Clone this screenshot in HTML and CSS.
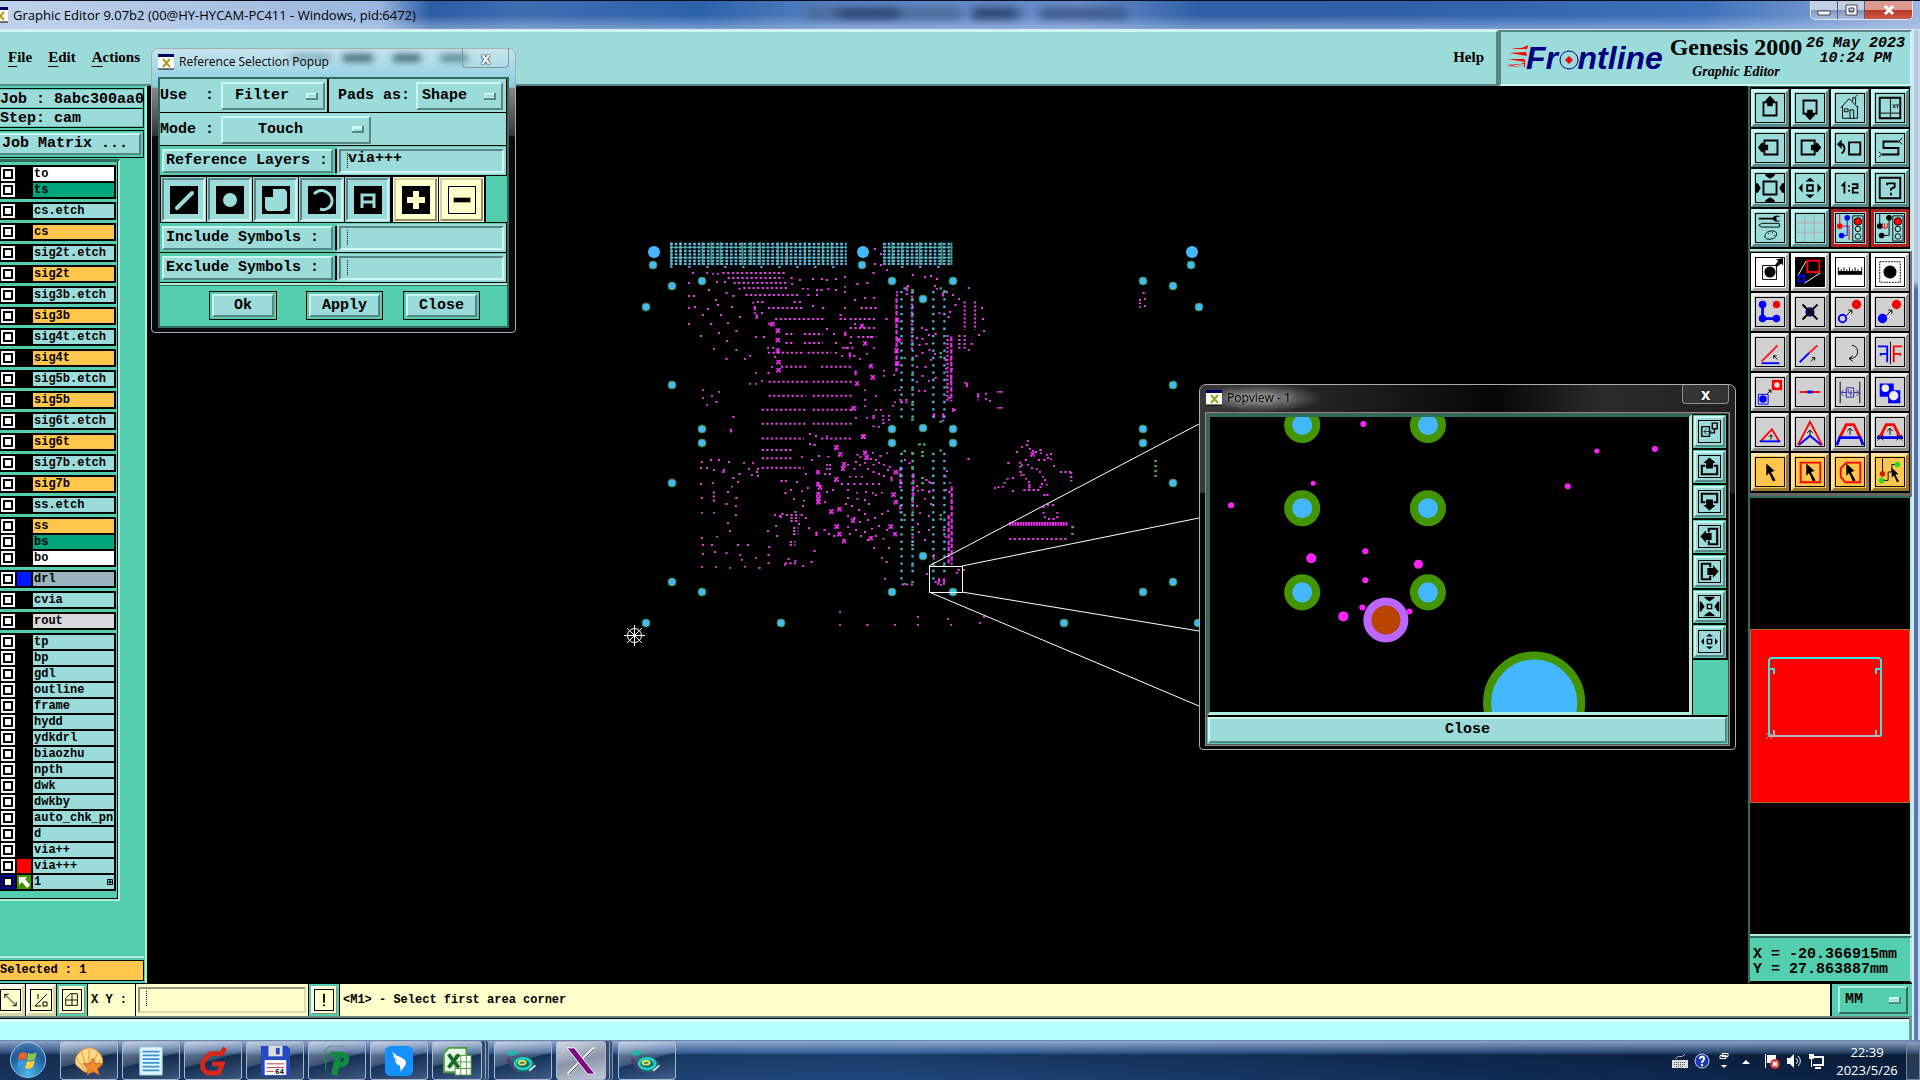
FILE: index.html
```html
<!doctype html>
<html lang="en">
<head>
    <meta charset="UTF-8" />
    <meta name="viewport" content="width=device-width, initial-scale=1.0" />
    <title>Graphic Editor 9.07b2</title>
    <link rel="stylesheet" href="styles.css">
</head>
<body>
    <!-- shared icon shapes -->
    <svg class="defs" aria-hidden="true">
        <symbol id="i-up" viewBox="0 0 30 30"><path class="t2" d="M8 9H22V23H8z"/><path d="M15 2l5 5v2h-2v4h-6V9h-2V7z"/></symbol>
        <symbol id="i-down" viewBox="0 0 30 30"><path class="t2" d="M8 7H22V21H8z"/><path d="M15 28l5-5v-2h-2v-4h-6v4h-2v2z"/></symbol>
        <symbol id="i-left" viewBox="0 0 30 30"><path class="t2" d="M9 7H23V22H9z"/><path d="M2 14.500l4-5h2v2h5v6H8v2H6z"/></symbol>
        <symbol id="i-right" viewBox="0 0 30 30"><path class="t2" d="M6 7H20V22H6z"/><path d="M27 14.500l-4-5h-2v2h-5v6h5v2h2z"/></symbol>
        <symbol id="i-in" viewBox="0 0 30 30"><path class="t2" d="M8 8H22V22H8z"/><path d="M15 5l-5-3V0h10v2zM15 25l-5 3v2h10v-2zM5 15l-3-5H0v10h2zM25 15l3-5h2v10h-2z"/></symbol>
        <symbol id="i-out" viewBox="0 0 30 30"><path class="t2" d="M12 12H18V18H12z"/><path d="M15 4l5 4H10zM15 26l5-4H10zM3 15l4-5v10zM27 15l-4-5v10z"/></symbol>
        <symbol id="i-arrow" viewBox="0 0 30 30"><path d="M11 6l9 8-4 1 5 9-3 1-4-9-3 3z"/></symbol>
        <symbol id="i-light" viewBox="0 0 30 30"><path class="t1" d="M18 2H29V29H18z"/><circle cx="23.500" cy="8" r="4" fill="#f00" stroke="#000"/><circle class="t1" cx="23.500" cy="16" r="3"/><circle class="t1" cx="23.500" cy="24" r="3"/></symbol>
        <symbol id="i-xwin" viewBox="0 0 16 16"><path fill="#fff" d="M0 0h16v15H0z"/><path fill="#006" d="M0 0h16v3H0z"/><path d="M5 5l7 8M12 5l-7 8" stroke="#a9a020" stroke-width="2"/><path class="t1" d="M0 15H16"/></symbol>
        <symbol id="i-snail" viewBox="3 0 36 30"><ellipse cx="21" cy="19" rx="13" ry="9" fill="#146f72"/><path d="M1 8c6-6 12-6 15-2l-6 3z" fill="#22b8a8"/><path d="M3 12l7 9 4 5" stroke="#513a72" stroke-width="4" fill="none"/><ellipse cx="21" cy="18" rx="9" ry="6" fill="none" stroke="#28d0be" stroke-width="3"/><ellipse cx="20" cy="17" rx="4" ry="2" fill="none" stroke="#e6e85a" stroke-width="2"/><path d="M28 26l7-6" stroke="#ddd" stroke-width="2"/></symbol>
    </svg>

    <header class="titlebar">
        <svg class="app-icon"><use href="#i-xwin"/></svg>
        <h1>Graphic Editor 9.07b2 (00@HY-HYCAM-PC411 - Windows, pid:6472)</h1>
        <div class="ghost"></div>
        <div class="win-buttons">
            <button aria-label="Minimize"><svg viewBox="0 0 16 12"><path fill="#fff" stroke="#445" d="M2 7h12v4H2z"/></svg></button>
            <button aria-label="Maximize"><svg viewBox="0 0 16 12"><path fill="#fff" stroke="#445" fill-rule="evenodd" d="M3 1h11v10H3zM6 4h5v4H6z"/></svg></button>
            <button class="win-close" aria-label="Close window"><svg viewBox="0 0 16 12"><path d="M4 2l8 8M12 2l-8 8" stroke="#fff" stroke-width="3"/></svg></button>
        </div>
    </header>

    <div class="window">
        <div class="top">
            <nav class="menubar">
                <a href="#"><u>F</u>ile</a>
                <a href="#"><u>E</u>dit</a>
                <a href="#"><u>A</u>ctions</a>
                <a href="#" class="help">Help</a>
            </nav>
            <div class="brand">
                <svg class="logo" viewBox="0 -5 162 40">
                    <path fill="#f00" d="M4 4h12l6-3-1 4zM3 9L20 8l1 4zM1 15l17 0 2 3zM0 21l15-1 4-2v5zM6 5L22 3l-2 2zM2 22l16 1v-3z"/>
                    <text x="20" y="25">Fr<tspan fill="#9bdcdb">o</tspan>ntline</text>
                    <circle cx="63" cy="16" r="9" fill="#9bdcdb" stroke="#000080"/>
                    <path fill="#f00" d="M63 12l4 4-4 4-4-4z"/>
                </svg>
                <div class="product">
                    <strong>Genesis 2000</strong>
                    <em>Graphic Editor</em>
                </div>
                <div class="date">26 May 2023<br>10:24 PM</div>
            </div>
        </div>

        <main>
            <aside class="layers-panel">
                <div class="job">
                    <div>Job : 8abc300aa0</div>
                    <div>Step: cam</div>
                </div>
                <div class="matrix"><button class="bevel">Job Matrix ...</button></div>
                <div class="layers">
                    <div class="group">
                        <label><input type="checkbox"><i></i><span class="white">to</span></label>
                        <label><input type="checkbox"><i></i><span class="green">ts</span></label>
                    </div>
                    <div class="group"><label><input type="checkbox"><i></i><span>cs.etch</span></label></div>
                    <div class="group"><label><input type="checkbox"><i></i><span class="orange">cs</span></label></div>
                    <div class="group"><label><input type="checkbox"><i></i><span>sig2t.etch</span></label></div>
                    <div class="group"><label><input type="checkbox"><i></i><span class="orange">sig2t</span></label></div>
                    <div class="group"><label><input type="checkbox"><i></i><span>sig3b.etch</span></label></div>
                    <div class="group"><label><input type="checkbox"><i></i><span class="orange">sig3b</span></label></div>
                    <div class="group"><label><input type="checkbox"><i></i><span>sig4t.etch</span></label></div>
                    <div class="group"><label><input type="checkbox"><i></i><span class="orange">sig4t</span></label></div>
                    <div class="group"><label><input type="checkbox"><i></i><span>sig5b.etch</span></label></div>
                    <div class="group"><label><input type="checkbox"><i></i><span class="orange">sig5b</span></label></div>
                    <div class="group"><label><input type="checkbox"><i></i><span>sig6t.etch</span></label></div>
                    <div class="group"><label><input type="checkbox"><i></i><span class="orange">sig6t</span></label></div>
                    <div class="group"><label><input type="checkbox"><i></i><span>sig7b.etch</span></label></div>
                    <div class="group"><label><input type="checkbox"><i></i><span class="orange">sig7b</span></label></div>
                    <div class="group"><label><input type="checkbox"><i></i><span>ss.etch</span></label></div>
                    <div class="group">
                        <label><input type="checkbox"><i></i><span class="orange">ss</span></label>
                        <label><input type="checkbox"><i></i><span class="green">bs</span></label>
                        <label><input type="checkbox"><i></i><span class="white">bo</span></label>
                    </div>
                    <div class="group"><label><input type="checkbox"><i class="blue"></i><span class="slate">drl</span></label></div>
                    <div class="group"><label><input type="checkbox"><i></i><span>cvia</span></label></div>
                    <div class="group"><label><input type="checkbox"><i></i><span class="silver">rout</span></label></div>
                    <div class="group">
                        <label><input type="checkbox"><i></i><span>tp</span></label>
                        <label><input type="checkbox"><i></i><span>bp</span></label>
                        <label><input type="checkbox"><i></i><span>gdl</span></label>
                        <label><input type="checkbox"><i></i><span>outline</span></label>
                        <label><input type="checkbox"><i></i><span>frame</span></label>
                        <label><input type="checkbox"><i></i><span>hydd</span></label>
                        <label><input type="checkbox"><i></i><span>ydkdrl</span></label>
                        <label><input type="checkbox"><i></i><span>biaozhu</span></label>
                        <label><input type="checkbox"><i></i><span>npth</span></label>
                        <label><input type="checkbox"><i></i><span>dwk</span></label>
                        <label><input type="checkbox"><i></i><span>dwkby</span></label>
                        <label><input type="checkbox"><i></i><span>auto_chk_pnl</span></label>
                        <label><input type="checkbox"><i></i><span>d</span></label>
                        <label><input type="checkbox"><i></i><span>via++</span></label>
                        <label><input type="checkbox"><i class="red"></i><span>via+++</span></label>
                        <label><input type="checkbox" checked><i class="work"><svg viewBox="0 0 14 14"><path fill="#fff" d="M2 2h8L8 4l5 6-3 3-5-6-3 3z"/></svg></i><span class="mark">1<svg viewBox="0 0 6 6"><path class="t1" d="M.500 .500h5v5h-5zM3 0v6M0 3h6"/></svg></span></label>
                    </div>
                </div>
                <div class="selected">Selected : 1</div>
            </aside>

            <section class="canvas">
                <svg class="board" viewBox="147 86 1601 897" preserveAspectRatio="xMinYMin slice">
                    <defs>
                        <marker id="via" markerUnits="userSpaceOnUse" markerWidth="6" markerHeight="6" refX="3" refY="3"><path fill="#f03cf0" d="M0 0h6v6H0z"/></marker>
                        <marker id="x" markerUnits="userSpaceOnUse" markerWidth="12" markerHeight="15" refX="6" refY="7"><path fill="#ff2cff" d="M0 0h4v3h3V0h5v5H9v4h3v6H8v-4H5v4H0V9h3V5H0z"/></marker>
                        <marker id="pad" markerUnits="userSpaceOnUse" markerWidth="12" markerHeight="12" refX="6" refY="6"><circle cx="6" cy="6" r="4" fill="#44b8ff" stroke="#3c8c28"/></marker>
                        <marker id="gdot" markerUnits="userSpaceOnUse" markerWidth="8" markerHeight="8" refX="4" refY="4"><path fill="#3fa56a" d="M0 0h8v7H0z"/></marker>
                    </defs>

                    <!-- upper half of the board -->
                    <g transform="translate(620 220) scale(.383 .333)">
                        <path class="rail" d="M131 82H592M131 113H592M687 82H868M687 113H868M134 67V143M157 67V135M215 67V135M238 67V135M262 67V135M320 67V135M343 67V135M366 67V135M413 67V135M436 67V135M483 67V135M529 67V135M552 67V135M711 67V135M735 67V135M782 67V135M840 67V135M865 67V135"/>
                        <path class="edge" d="M131 72H592M131 82H592M131 93H592M131 103H592M131 113H592M131 123H592M131 132H592M687 72H868M687 82H868M687 93H868M687 103H868M687 113H868M687 123H868M687 132H868"/>
                        <path class="edge-last" d="M131 141H560M734 141H840"/>
                        <path class="vias" d="M280 159H431M281 174H427M296 189H437M322 204H440M327 225H470M386 264H476M405 297H532M432 342H450M480 342H530M432 369H450M480 369H530M386 399H478M490 399H552M420 441H492M525 441H606M388 486H494M503 486H606M388 528H486M503 528H606M370 570H486M503 570H606M370 612H486M503 612H606M370 656H480M525 656H606M600 297H670M600 324H670M628 264H670M620 351H670M580 384H612M855 345V545M900 245V330M927 245V330M886 345V390M900 345V390M762 215V390M720 217H732M720 227H732M850 480H866M850 420H866"/>
                        <path class="wall" d="M722 235V455M865 350V545M843 218V230M749 200V225M600 398V418M844 580V605M820 580V600M935 520V542M588 335V350M352 258V282M357 283V300M615 452V470M290 627V638M906 488V506"/>
                        <path class="holes" d="M735 213V605M764 213V605M818 213V605M847 213V605"/>
                        <polyline marker-start="url(#x)" marker-mid="url(#x)" marker-end="url(#x)" points="412,332 412,360 412,392 414,426 414,450 640,370 619,491 660,472 635,650 724,300 728,360 722,392 724,430 398,312 632,318 655,438 610,565"/>
                        <polyline marker-start="url(#via)" marker-mid="url(#via)" marker-end="url(#via)" points="190,159 228,159 242,161 256,161 270,159 254,186 274,186 181,189 312,206 232,210 181,228 193,228 278,219 296,228 250,240 181,264 196,261 230,267 256,255 292,261 216,285 264,285 313,291 181,312 238,312 282,309 258,339 304,333 212,348 280,363 356,351 376,351 246,387 304,390 278,417 326,417 340,408 386,384 400,384 340,492 356,459 370,484 216,510 216,534 240,528 258,516 252,546 228,555 296,591 356,492 448,174 470,180 504,177 528,177 540,180 564,177 588,171 450,192 478,206 490,206 514,210 526,210 544,208 564,210 588,200 492,225 514,225 360,246 372,246 456,246 470,246 348,248 504,258 530,264 588,216 614,240 588,264 576,285 588,297 576,297 614,312 370,279 540,327 558,342 564,369 390,312 564,399 640,234 664,234 620,192 646,189 662,159 666,132 666,87 682,102 682,135 698,150 696,297 604,351 602,369 612,408 626,417 580,408 590,384 644,402 664,384 655,351 640,540 668,528 690,453 690,468 716,465 718,512 730,512 640,512 640,560 616,594 644,594 662,594 662,620 676,621 662,588 682,570 686,588 686,600 702,588 702,600 688,610 712,558 718,548 668,570 765,165 796,171 812,168 828,177 752,198 822,198 828,206 854,216 886,237 912,204 870,225 876,255 862,276 858,291 945,264 948,297 951,333 938,345 918,372 912,390 834,280 788,324 800,330 776,354 790,357 806,345 824,342 782,375 800,372 774,408 790,399 808,390 822,402 776,441 798,441 812,420 790,468 806,483 776,486 824,474 796,513 780,513 732,540 748,540 735,546 748,548 870,567 874,570 870,573 900,488 956,522 956,537 966,543 988,516 996,516 988,564 996,564 396,441 388,459 404,411 1367,219 1370,237 1358,240 1358,250 1358,260 1370,258 496,642 512,648 540,650 604,570 850,420 852,447 866,447 854,500 860,534"/>
                        <polyline marker-start="url(#gdot)" marker-mid="url(#gdot)" marker-end="url(#gdot)" points="744,206 764,210 838,206 848,214 744,414 838,400 838,412 838,606 764,600 764,238 764,285 764,330 764,375 764,420 764,465 764,510 764,555"/>
                    </g>

                    <!-- lower half -->
                    <g transform="translate(620 430) scale(.383 .333)">
                        <path class="vias" d="M370 60H452M370 85H452M370 113H480M245 185V216M430 400H466M445 255H470M445 264H470M445 273H470M452 294H466M452 303H466M452 312H466M443 336H458M443 345H458M1053 180H1095M1148 126H1180M1178 126V155M1016 327H1168M764 190V240M764 320V350M735 464H768M1045 95V120"/>
                        <path class="wall" d="M866 170V405M858 255V400M732 110V175M732 225V250M766 130V200M513 305V318M709 140V156M833 445V462M846 445V462M1069 162V178"/>
                        <path class="chip" d="M1016 282H1169"/>
                        <path class="holes" d="M735 68V460M764 68V430M818 68V462M847 68V440"/>
                        <polyline marker-start="url(#x)" marker-mid="url(#x)" marker-end="url(#x)" points="635,20 565,52 575,72 585,102 582,116 517,126 517,162 518,192 518,206 518,216 565,148 573,237 552,245 566,290 573,312 585,333 720,126 714,194 720,216 707,290 718,312 644,82 608,272 655,324 640,68 1077,72 522,172"/>
                        <polyline marker-start="url(#via)" marker-mid="url(#via)" marker-end="url(#via)" points="214,96 212,114 212,162 214,204 214,248 214,324 216,345 216,372 214,411 496,12 512,18 496,42 508,45 238,90 258,90 284,96 228,114 246,120 270,126 272,120 324,98 348,98 336,117 360,117 358,126 344,135 312,132 296,144 308,156 243,160 292,170 360,138 282,186 304,204 302,228 278,222 245,248 302,255 282,280 288,303 254,320 240,345 308,345 248,366 278,370 314,376 334,345 318,390 356,384 388,400 388,375 390,351 326,410 288,414 250,411 364,414 386,303 408,288 404,255 418,258 424,252 436,255 458,246 420,262 422,153 434,153 486,132 462,156 432,189 446,180 476,184 490,174 454,208 480,212 478,228 474,255 486,264 494,294 468,282 410,318 476,82 502,90 520,78 544,80 540,104 548,104 540,116 548,116 536,132 548,132 540,186 536,216 556,180 580,162 596,162 612,162 628,162 644,162 660,162 676,162 600,140 616,140 632,140 596,104 616,96 612,116 626,106 640,98 662,104 676,98 690,104 704,110 620,74 628,82 660,68 680,78 698,70 655,86 668,90 648,116 662,126 676,132 690,138 700,120 596,180 618,188 642,186 660,190 596,204 620,206 640,210 650,222 668,196 684,188 590,222 606,228 624,240 640,252 596,258 612,264 626,276 648,270 666,264 684,252 700,244 596,292 616,300 640,306 658,296 676,288 698,300 534,300 546,312 560,318 600,312 630,318 648,330 668,318 688,326 664,354 702,354 684,384 696,396 692,447 508,363 478,408 500,396 430,405 440,388 458,392 800,150 808,156 790,180 778,182 806,186 796,206 812,222 776,228 784,250 806,258 778,282 806,300 796,330 780,306 808,184 812,160 776,168 744,90 756,100 854,124 850,140 862,158 852,180 860,186 910,87 1014,99 1066,33 1050,50 1062,45 1070,56 1078,62 1086,66 1098,60 1100,70 1114,74 1126,72 1118,84 1126,88 1134,108 1094,90 1060,90 1066,104 1050,106 1046,126 1054,134 1060,146 1068,156 1076,114 1088,118 1096,126 1104,140 1110,150 1102,162 1098,172 1114,164 1108,90 1036,66 1026,144 1012,146 1004,158 1000,170 988,172 980,174 1026,183 1048,136 1108,195 1116,195 1106,232 1106,248 1118,225 1130,225 1142,248 1110,262 1120,267 1132,267 1142,262 802,432 880,429 884,420 898,420 824,456 830,462 838,465 846,462 575,546 575,585 646,585 718,585 778,561 778,585 857,567 865,585 940,579 951,561 820,376 820,386 846,300 850,320 290,2"/>
                        <polyline marker-start="url(#gdot)" marker-mid="url(#gdot)" marker-end="url(#gdot)" points="744,64 838,62 764,70 764,112 764,160 764,210 764,256 764,300 764,345 764,408 744,256 744,270 838,256 838,268 790,66 790,78 782,44 794,44 790,144 790,160 1399,93 1399,108 1399,124 1399,138 1182,292 1182,312 744,462 764,456 820,408 846,408"/>
                    </g>

                    <polyline marker-start="url(#pad)" marker-mid="url(#pad)" marker-end="url(#pad)" points="653,265 862,265 1191,265 702,281 892,281 953,281 1143,281 672,286 1173,286 646,307 1199,307 923,299 672,385 1173,385 702,429 892,429 953,429 923,428 1143,429 702,443 892,443 953,443 1143,443 672,483 1173,483 923,556 672,582 1173,582 702,592 892,592 953,592 1143,592 646,623 781,623 1064,623 1198,623"/>
                    <g fill="#44b8ff"><circle cx="654" cy="252" r="6"/><circle cx="863" cy="252" r="6"/><circle cx="1192" cy="252" r="6"/></g>

                    <g class="zoom-lines">
                        <path d="M929.500 566.500H962.500V592.500H929.500zM929 566L1199 424M962 566L1199 518M962 592L1199 631M929 592L1199 706"/>
                        <path d="M624 635.500H645M634.500 625V646M627 628l15 15M642 628l-15 15"/>
                        <circle cx="634.500" cy="635.500" r="7"/>
                    </g>
                </svg>
            </section>

            <aside class="tools">
                <div class="toolset aqua">
                    <button aria-label="Pan up"><svg viewBox="0 0 30 30"><use href="#i-up"/></svg></button>
                    <button aria-label="Pan down"><svg viewBox="0 0 30 30"><use href="#i-down"/></svg></button>
                    <button aria-label="Home"><svg viewBox="0 0 30 30"><path class="t1" d="M5 15l9-10 10 10M7 13v13h16V13M9 16h4v3H9zM15 26v-9h4v9M18 8V4h3v7M21 3l2-2"/></svg></button>
                    <button aria-label="Popview"><svg viewBox="0 0 30 30"><path class="t2" d="M4 4H26V26H4z"/><path class="t1" d="M15.500 4V26M4 20.500H26M18 11l3 4M21 11l-3 4M22 11l1 2 1-2M23 13v2"/></svg></button>
                    <button aria-label="Pan left"><svg viewBox="0 0 30 30"><use href="#i-left"/></svg></button>
                    <button aria-label="Pan right"><svg viewBox="0 0 30 30"><use href="#i-right"/></svg></button>
                    <button aria-label="Previous view"><svg viewBox="0 0 30 30"><path class="t2" d="M14 9H26V22H14z"/><path class="t2" d="M4 11h3c3 3 3 7-1 10"/><path d="M1 11l5-5v10z"/></svg></button>
                    <button aria-label="Snake view"><svg viewBox="0 0 30 30"><path class="t2" d="M25 8H8v7h16v7H6"/><path class="t1" d="M28 4l-3 4 3 3M3 19l3 3-3 3"/></svg></button>
                    <button aria-label="Zoom in"><svg viewBox="0 0 30 30"><use href="#i-in"/></svg></button>
                    <button aria-label="Zoom out"><svg viewBox="0 0 30 30"><use href="#i-out"/></svg></button>
                    <button aria-label="Scale"><svg viewBox="0 0 30 30"><path class="t2" d="M6 13l3-3v11M14 12v2M14 17v2M17 11h6v4h-5v5h6"/></svg></button>
                    <button aria-label="What is"><svg viewBox="0 0 30 30"><path class="t2" d="M4 4H26V26H4zM12 12v-2h8v4l-4 2v2M16 20v3"/></svg></button>
                    <button aria-label="Setup"><svg viewBox="0 0 30 30"><path d="M3 4h15c2-3 6-3 8-1h-4v4h4c-2 2-6 2-8-1H3z"/><path class="t1" d="M3 12l3-2h19v4H6zM10 22c2-5 12-5 12-1s-3 6-8 6-5-3-4-5zM13 21h1M17 20h1M19 23h1"/></svg></button>
                    <button aria-label="Grid"><svg viewBox="0 0 30 30"><path fill="none" stroke="#b6a0aa" d="M9.500 0V30M19.500 0V30M0 9.500H30M0 19.500H30"/></svg></button>
                    <button class="stop" aria-label="Net check"><svg viewBox="0 0 30 30"><path fill="none" stroke="#f00" d="M4 0v13h10v15"/><circle cx="4" cy="13" r="3" fill="#f00"/><path fill="none" stroke="#00f" d="M12 4v19H6"/><circle cx="12" cy="4" r="3" fill="#00f"/><circle cx="6" cy="23" r="3" fill="#00f"/><use href="#i-light"/></svg></button>
                    <button class="stop" aria-label="Spacing check"><svg viewBox="0 0 30 30"><path class="t1" d="M4 0v13M14 4v19H6"/><circle cx="4" cy="13" r="3"/><circle cx="14" cy="4" r="3"/><circle cx="6" cy="23" r="3"/><path stroke="#f00" fill="none" d="M7 10v5h5v-5M9 10v5"/><use href="#i-light"/></svg></button>
                </div>

                <div class="toolset gray">
                    <button class="plain" aria-label="Move feature"><svg viewBox="0 0 30 30"><path class="t1" d="M7 8H22V23H7z"/><circle cx="15" cy="15" r="6"/><path d="M20 8l4-5-3-1 8-2v8l-2-2-5 4z"/></svg></button>
                    <button class="plain dark" aria-label="Highlight"><svg viewBox="0 0 30 30"><path stroke="#fff" d="M2 19L11 3M9 27L26 16"/><path fill="none" stroke="#f00" stroke-width="2" d="M12 3H25V15H12z"/><path fill="none" stroke="#00f" stroke-width="2" d="M3 19H9V25H3z"/></svg></button>
                    <button class="plain" aria-label="Measure"><svg viewBox="0 0 30 30"><path d="M2 14h26v4H2z"/><path class="t1" d="M2.500 10v6M5.500 12v4M8.500 10v6M11.500 12v4M14.500 10v6M17.500 12v4M20.500 10v6M23.500 12v4M27.500 10v6"/></svg></button>
                    <button class="plain" aria-label="Select pad"><svg viewBox="0 0 30 30"><path class="t1" stroke-dasharray="2 1" d="M4 4H26V26H4z"/><circle cx="15" cy="15" r="7"/></svg></button>
                    <button aria-label="Net"><svg viewBox="0 0 30 30"><path stroke="#00f" stroke-width="3" fill="none" d="M7 7V22H22"/><g fill="#00f"><circle cx="7" cy="7" r="4"/><circle cx="7" cy="22" r="4"/><circle cx="22" cy="22" r="4"/></g><circle cx="22" cy="7" r="4" fill="#f00"/></svg></button>
                    <button aria-label="Delete"><svg viewBox="0 0 30 30"><circle cx="15" cy="15" r="5" fill="#118"/><path class="t2" d="M7 7l16 16M23 7L7 23"/></svg></button>
                    <button aria-label="Copy"><svg viewBox="0 0 30 30"><circle cx="7" cy="22" r="4" fill="none" stroke="#00f" stroke-width="2"/><circle cx="22" cy="7" r="5" fill="#f00"/><path class="t1" d="M11 19l6-6M13 13h4v4"/></svg></button>
                    <button aria-label="Move"><svg viewBox="0 0 30 30"><circle cx="7" cy="22" r="5" fill="#00f"/><circle cx="22" cy="7" r="5" fill="#f00"/><path class="t1" d="M11 19l6-6M13 13h4v4"/></svg></button>
                    <button aria-label="Rotate line"><svg viewBox="0 0 30 30"><path stroke="#f02020" stroke-width="2" d="M6 25L23 8"/><path stroke="#00f" stroke-width="2" d="M6 27H25"/><path class="t1" d="M23 23l-4-4M19 22v-3h3"/></svg></button>
                    <button aria-label="Stretch line"><svg viewBox="0 0 30 30"><path stroke="#00f" stroke-width="2" d="M4 26L14 16"/><path stroke="#f02020" stroke-width="2" d="M14 16L23 8"/><path class="t1" d="M16 25l4-4M17 21h3v3"/></svg></button>
                    <button aria-label="Rotate"><svg viewBox="0 0 30 30"><path class="t1" d="M17 8c8 0 9 14-2 14M18 19l-4 3 4 3"/></svg></button>
                    <button aria-label="Mirror"><svg viewBox="0 0 30 30"><path fill="none" stroke="#00f" stroke-width="2" d="M2 9H12V26M12 17H5v2"/><path fill="none" stroke="#f00" stroke-width="2" d="M28 9H19V26M19 17H26v2"/><path class="t1" d="M15.500 4V28"/></svg></button>
                    <button aria-label="Replace"><svg viewBox="0 0 30 30"><path fill="#f00" d="M17 2h11v11H17z"/><circle cx="22.500" cy="7.500" r="3" fill="#ddd"/><path fill="none" stroke="#00f" d="M2.500 17.500H13V28H2.500z"/><circle cx="7.500" cy="22.500" r="4" fill="#00f"/><path class="t1" d="M12 17l4-4M13 13h3v3"/></svg></button>
                    <button aria-label="Break"><svg viewBox="0 0 30 30"><path stroke="#f00" stroke-width="2" d="M4 15H26"/><path stroke="#00f" stroke-width="3" d="M12 15h6"/></svg></button>
                    <button aria-label="Spacing"><svg viewBox="0 0 30 30"><path class="t1" d="M4.500 4V27M25.500 4V27"/><path fill="none" stroke="#22a" d="M6 15.500h5M19 15.500h5M8 13l-3 3 3 3M22 13l3 3-3 3M11 10.500h8v10h-8zM13 12v4h4M16 13v6"/></svg></button>
                    <button aria-label="Merge"><svg viewBox="0 0 30 30"><path fill="#00f" d="M4 6h15v7h7v14H13v-7H4z"/><g fill="#eee"><circle cx="10" cy="11" r="4"/><circle cx="19" cy="19" r="5"/></g></svg></button>
                    <button aria-label="Angle"><svg viewBox="0 0 30 30"><path fill="none" stroke="#f00" d="M5 25L17 12l8 13" stroke-width="2"/><path stroke="#00f" stroke-width="2" d="M4 25H26"/><path class="t1" d="M16 23v-5M14 20l2-2 2 2"/></svg></button>
                    <button aria-label="Peak"><svg viewBox="0 0 30 30"><path fill="none" stroke="#00f" stroke-width="2" d="M3 29L15 19l12 10"/><path fill="none" stroke="#f00" stroke-width="2" d="M2 29L15 4l13 25"/><path class="t1" d="M15 19v-6M12 16l3-3 3 3"/></svg></button>
                    <button aria-label="Trapeze"><svg viewBox="0 0 30 30"><path fill="none" stroke="#f00" stroke-width="3" d="M4 21L11 7h8l7 14"/><path fill="none" stroke="#00f" stroke-width="3" d="M1 29l3-8H26l3 8"/><path class="t1" d="M15 18v-7M12 14l3-3 3 3"/></svg></button>
                    <button aria-label="Trapeze cut"><svg viewBox="0 0 30 30"><path fill="none" stroke="#f00" stroke-width="3" d="M4 21L11 7h8l7 14"/><path stroke="#00f" stroke-width="3" d="M1 21H29"/><path class="t1" d="M15 18v-7M12 14l3-3 3 3M2 18l6 6M8 18l-6 6M22 18l6 6M28 18l-6 6"/></svg></button>
                    <button class="amber" aria-label="Select"><svg viewBox="0 0 30 30"><use href="#i-arrow"/></svg></button>
                    <button class="amber" aria-label="Select frame"><svg viewBox="0 0 30 30"><path fill="none" stroke="#f00" stroke-width="2" d="M5 5H26V26H5z"/><use href="#i-arrow"/></svg></button>
                    <button class="amber" aria-label="Select polygon"><svg viewBox="0 0 30 30"><path fill="none" stroke="#f00" stroke-width="2" d="M11 5H26V26H10L5 20V11z"/><use href="#i-arrow"/></svg></button>
                    <button class="amber" aria-label="Select net"><svg viewBox="0 0 30 30"><path class="t1" d="M7 0V17M23 7H17V15H13V24H6"/><circle cx="7" cy="17" r="3" fill="#c20"/><circle cx="23" cy="7" r="3" fill="#2d2"/><circle cx="6" cy="24" r="3" fill="#2d2"/><use href="#i-arrow" x="8" y="6" width="24" height="24"/></svg></button>
                </div>

                <div class="overview">
                    <svg viewBox="0 0 160 174">
                        <path fill="#f00" stroke="#a07820" d="M.500 .500h159v173H.500z"/>
                        <path fill="none" stroke="#3fe0e0" stroke-width="2" d="M19 107V31l2-2H129l2 2V107M19 40h5v5M131 40h-5v5"/>
                        <path fill="none" stroke="#b4bcbc" stroke-width="2" d="M19 107H131M24 107v-6M126 107v-6"/>
                        <path fill="none" stroke="#9aa" d="M16 104l6 6M22 104l-6 6"/>
                    </svg>
                </div>
                <div class="coords">X = -20.366915mm<br>Y = 27.863887mm</div>
            </aside>
        </main>

        <footer class="status">
            <button class="snap" aria-label="Absolute"><svg viewBox="0 0 20 20"><path class="t1" d="M4 4l12 12M4 8V4h4M16 12v4h-4"/></svg></button>
            <button class="snap" aria-label="Angle snap"><svg viewBox="0 0 20 20"><path class="t1" d="M4 16L16 4M4 16H10M7 4v5M12 12h4v4h-4z"/></svg></button>
            <button class="snap on" aria-label="Grid snap"><svg viewBox="0 0 20 20"><path class="t1" d="M3 16V8l5-5h8v13zM10 3v13M3 10h13"/></svg></button>
            <label for="xy">X Y :</label>
            <div class="xy-box"><input id="xy" class="field cursor" type="text"></div>
            <button class="snap on alert" aria-label="Messages"><svg viewBox="0 0 20 20"><path class="t2" d="M10 3v10M10 15v2"/></svg></button>
            <p>&lt;M1&gt; - Select first area corner</p>
            <div class="units"><select aria-label="Units"><option>MM</option></select></div>
        </footer>
        <div class="strip"></div>
    </div>

    <nav class="taskbar">
        <button class="start" aria-label="Start"><svg viewBox="0 0 24 24"><path fill="#e8622a" d="M3 6c3-2 5-2 8-1l-1 7c-3-1-5-1-8 1z"/><path fill="#8bc34a" d="M12 5c3 1 6 1 9-1l-2 7c-3 2-5 2-8 1z"/><path fill="#3b9be0" d="M2 14c3-2 5-2 8-1l-1 7c-3-1-5-1-8 1z"/><path fill="#ffd23e" d="M11 13c3 1 5 1 8-1l-2 7c-3 2-5 2-8 1z"/></svg></button>
        <button class="task" aria-label="Shell"><svg viewBox="0 0 32 32"><path fill="#ffd98a" stroke="#d8922c" d="M16 29L10 27 2 20C-1 11 8 2 16 2s17 9 14 18l-8 7z"/><path fill="none" stroke="#d8922c" d="M16 28V4M14 27L8 6M12 27L3 13M18 27l7-20M20 27l9-13"/><path fill="#f08c2e" stroke="#c45e12" d="M20 13l3 6 7 0-5 5 2 7-7-4-6 4 1-7-5-5 7 0z"/></svg></button>
        <button class="task" aria-label="Notes"><svg viewBox="0 0 32 32"><path fill="#dff4ff" stroke="#8cc" d="M4 1H28V31H4z"/><path stroke="#3a94c8" stroke-width="2" d="M7 6H25M7 10H25M7 14H25M7 18H25M7 22H25M7 26H25"/></svg></button>
        <button class="task" aria-label="Genesis"><svg viewBox="0 0 32 32"><path fill="none" stroke="#d8261c" stroke-width="5" d="M29 2l-4 6H13L5 17v7l5 5h12l4-10H15"/></svg></button>
        <button class="task" aria-label="Disk 64"><svg viewBox="0 0 32 32"><path fill="#2748c4" d="M1 0H29l3 3V32H1z"/><path fill="#ddd" d="M9 0H24V11H9z"/><path fill="#2748c4" d="M17 2h4v7h-4z"/><path fill="#fff" d="M5 15H28V31H5z"/><path stroke="#b33" d="M7 19H26M7 23H26M7 27H15"/><text x="16" y="30" font-size="8" font-family="Liberation Mono">64</text></svg></button>
        <button class="task" aria-label="P editor"><svg viewBox="0 0 32 32"><path fill="none" stroke="#159447" d="M4 26V4l4-4H24"/><path fill="none" stroke="#128a40" stroke-width="7" d="M13 31L17 13"/><path fill="none" stroke="#128a40" stroke-width="6" d="M9 9h12c8 1 6 11-1 11h-6"/></svg></button>
        <button class="task" aria-label="Chat"><svg viewBox="0 0 32 32"><rect x="1" y="0" width="30" height="32" rx="6" fill="#1590ff"/><path fill="#fff" d="M9 6c5 6 11 5 14 10 2 5-3 6-5 12l-1-7c-4-1-5-4-5-6l3 1c-3-2-5-4-5-6l2 1c-2-2-3-3-3-5z"/></svg></button>
        <button class="task stack" aria-label="Spreadsheet"><svg viewBox="0 0 32 32"><path fill="#e9f7e4" stroke="#4a9c3c" stroke-width="2" d="M2 8l5-6H26V28H2z"/><path fill="#fff" stroke="#4a9c3c" d="M14 10H31V31H14zM14 17H31M14 24H31M20 10V31M26 10V31"/><path stroke="#1a6b2a" stroke-width="4" d="M7 9l11 14M18 9L7 23"/></svg></button>
        <button class="task" aria-label="Genesis engine"><svg viewBox="0 0 36 32"><use href="#i-snail"/></svg></button>
        <button class="task stack active" aria-label="X server"><svg viewBox="0 0 32 32"><path stroke="#fff" stroke-width="3" d="M30 2L2 30"/><path stroke="#333" stroke-width="1" d="M30 3L3 30"/><path fill="#7a0c86" stroke="#fff" d="M1 2h8L31 30h-8z"/></svg></button>
        <button class="task" aria-label="Genesis tools"><svg viewBox="0 0 36 32"><use href="#i-snail"/></svg></button>
        <div class="tray">
            <svg viewBox="0 0 16 16"><path fill="#ddd" d="M0 7h16v8H0z"/><path stroke="#555" stroke-dasharray="1 1" d="M2 9.500H14M2 11.500H14M4 13.500H12"/><path fill="none" stroke="#bbb" d="M4 6c1-5 6 0 9-5"/></svg>
            <svg viewBox="0 0 16 16"><circle cx="8" cy="8" r="7" fill="#1d38b8" stroke="#ccd"/><path fill="none" stroke="#fff" stroke-width="2" d="M6 6c0-3 5-3 4 0 0 2-2 1-2 4M8 11v2"/></svg>
            <svg viewBox="0 0 16 16"><path fill="none" stroke="#fff" d="M6 0.500h6v3H6zM4 2.500h6v3H4z"/><path fill="#fff" d="M5 12h6l-3 3z"/></svg>
            <svg viewBox="0 0 16 16"><path fill="#fff" d="M4 11h8L8 7z"/></svg>
            <svg class="flag" viewBox="0 0 16 16"><path stroke="#fff" d="M1.500 1v14"/><path fill="#fff" d="M3 2h9v8H3z"/><circle cx="11" cy="11" r="5" fill="#d33"/><path stroke="#fff" stroke-width="2" d="M9 9l4 4M13 9l-4 4"/></svg>
            <svg viewBox="0 0 16 16"><path fill="#fff" d="M1 5h3l4-4v14l-4-4H1z"/><path fill="none" stroke="#fff" d="M10 5c2 2 2 4 0 6M12 3c3 3 3 7 0 10"/></svg>
            <svg viewBox="0 0 16 16"><path fill="none" stroke="#fff" stroke-width="2" d="M5 4H15V12H5M7 15h6"/><path fill="#fff" d="M1 1h5v5H4v8H3V6H1z"/></svg>
        </div>
        <time class="clock">22:39<br>2023/5/26</time>
        <button class="desktop" aria-label="Show desktop"></button>
    </nav>

    <!-- reference selection window -->
    <form class="popup selection">
        <div class="popup-title">
            <div class="ghost"></div>
            <svg class="app-icon"><use href="#i-xwin"/></svg>
            <h2>Reference Selection Popup</h2>
            <button type="button" class="popup-close" aria-label="Close popup">x</button>
        </div>
        <div class="popup-body">
            <div class="row split">
                <div class="cell"><label for="use">Use&nbsp; :</label><select id="use" class="sel-filter"><option>Filter</option></select></div>
                <div class="cell pads"><label for="pads">Pads as:</label><select id="pads" class="sel-shape"><option>Shape</option></select></div>
            </div>
            <div class="row">
                <div class="cell"><label for="mode">Mode :</label><select id="mode" class="sel-touch"><option>Touch</option></select></div>
            </div>
            <div class="row pair">
                <button type="button" class="bevel">Reference Layers :</button>
                <input class="field cursor" type="text" value="via+++" aria-label="Reference layers">
            </div>
            <div class="features">
                <button type="button" aria-label="Lines"><svg viewBox="0 0 28 28"><path stroke="#9bdcdb" stroke-width="4" stroke-linecap="round" d="M7 22L22 7"/></svg></button>
                <button type="button" aria-label="Pads"><svg viewBox="0 0 28 28"><circle cx="14" cy="14" r="7" fill="#9bdcdb"/></svg></button>
                <button type="button" aria-label="Surfaces"><svg viewBox="0 0 28 28"><path fill="#9bdcdb" d="M11 3h12l2 3v16l-4 3H5l-2-3V11h8z"/></svg></button>
                <button type="button" aria-label="Arcs"><svg viewBox="0 0 28 28"><path fill="none" stroke="#9bdcdb" stroke-width="3" d="M6 8c8-8 19 0 18 8-1 6-7 9-12 7"/></svg></button>
                <button type="button" aria-label="Text"><svg viewBox="0 0 28 28"><path fill="none" stroke="#9bdcdb" stroke-width="3" d="M8 22V9h12v13M8 16h12"/></svg></button>
                <button type="button" class="cream" aria-label="Positive"><svg viewBox="0 0 28 28"><path stroke="#ffc" stroke-width="6" d="M14 5v18M5 14h18"/></svg></button>
                <button type="button" class="cream minus" aria-label="Negative"><svg viewBox="0 0 28 28"><path stroke="#000" stroke-width="5" d="M5 14h18"/></svg></button>
            </div>
            <div class="row pair">
                <button type="button" class="bevel">Include Symbols :</button>
                <input class="field cursor" type="text" aria-label="Include symbols">
            </div>
            <div class="row pair">
                <button type="button" class="bevel">Exclude Symbols :</button>
                <input class="field cursor" type="text" aria-label="Exclude symbols">
            </div>
            <div class="actions">
                <span class="ring"><button type="button" class="bevel ok">Ok</button></span>
                <span class="ring"><button type="button" class="bevel">Apply</button></span>
                <span class="ring"><button type="button" class="bevel">Close</button></span>
            </div>
        </div>
    </form>

    <!-- magnifier window -->
    <section class="popup popview">
        <div class="popup-title">
            <svg class="app-icon"><use href="#i-xwin"/></svg>
            <h2>Popview - 1</h2>
            <button class="popup-close" aria-label="Close popview">x</button>
        </div>
        <div class="popup-body">
            <div class="view">
                <svg class="magnified" viewBox="1211 417 478 295" preserveAspectRatio="xMinYMin slice">
                    <g fill="#44b8ff" stroke="#449400" stroke-width="8">
                        <circle cx="1303" cy="425" r="14"/><circle cx="1428.500" cy="425" r="14"/>
                        <circle cx="1303" cy="508" r="14"/><circle cx="1428.500" cy="508" r="14"/>
                        <circle cx="1303" cy="592" r="14"/><circle cx="1428.500" cy="592" r="14"/>
                        <circle cx="1534.500" cy="702" r="47"/>
                    </g>
                    <g fill="#ff22ff">
                        <circle cx="1364" cy="424" r="3"/><circle cx="1597" cy="451" r="2.500"/><circle cx="1655" cy="449" r="3"/>
                        <circle cx="1568" cy="486" r="3"/><circle cx="1314" cy="483" r="2.500"/><circle cx="1232" cy="505" r="3"/>
                        <circle cx="1312" cy="558" r="5"/><circle cx="1366" cy="551" r="3"/><circle cx="1419" cy="564" r="4.500"/>
                        <circle cx="1366" cy="580" r="3"/><circle cx="1344" cy="616" r="5"/><circle cx="1363" cy="607" r="3"/><circle cx="1410" cy="611" r="3"/>
                    </g>
                    <circle cx="1386.500" cy="619.500" r="18.500" fill="#b84400" stroke="#bb66ff" stroke-width="8"/>
                </svg>
                <div class="view-tools">
                    <button aria-label="Popview link"><svg viewBox="0 0 30 30"><path class="t2" d="M4 8H15V22H4zM19 3H26V11H19zM15 17h7V11"/><path class="t1" d="M18 15H7M11 11l-4 4 4 4"/></svg></button>
                    <button aria-label="Popview up"><svg viewBox="0 0 30 30"><path class="t3" d="M9 14H4V26H26V14H21"/><path d="M15 2l9 8h-4v8H10v-8H6z"/></svg></button>
                    <button aria-label="Popview down"><svg viewBox="0 0 30 30"><path class="t3" d="M9 16H4V4H26V16H21"/><path d="M15 28l9-8h-4v-8H10v8H6z"/></svg></button>
                    <button aria-label="Popview left"><svg viewBox="0 0 30 30"><path class="t3" d="M14 9V4H26V26H14V21"/><path d="M2 15l8-9v4h8v10h-8v4z"/></svg></button>
                    <button aria-label="Popview right"><svg viewBox="0 0 30 30"><path class="t3" d="M16 9V4H4V26H16V21"/><path d="M28 15l-8-9v4h-8v10h8v4z"/></svg></button>
                    <button aria-label="Popview zoom in"><svg viewBox="0 0 30 30"><path class="t2" d="M12 12H18V18H12z"/><path d="M15 8L8 3V1h14v2zM15 22l-7 5v2h14v-2zM8 15L3 8H1v14h2zM22 15l5-7h2v14h-2z"/></svg></button>
                    <button aria-label="Popview zoom out"><svg viewBox="0 0 30 30"><use href="#i-out"/></svg></button>
                </div>
            </div>
            <div class="view-close"><button class="bevel">Close</button></div>
        </div>
    </section>
</body>
</html>
```

FILE: styles.css
```css
:root {
    --aqua: #9bdcdb;
    --aqua-light: #cbf6f2;
    --aqua-dark: #588585;
    --teal: #53cfb0;
    --teal-light: #b2ecdd;
    --teal-dark: #316b5b;
    --orange: #ffc64d;
    --cream: #ffffcc;
    --mono: "Liberation Mono", "Courier New", monospace;
    --serif: "Liberation Serif", "Times New Roman", serif;
    --ui: "Open Sans", "Segoe UI", sans-serif;
}
* {
    box-sizing: border-box;
}
body {
    margin: 0;
    height: 100vh;
    display: flex;
    flex-direction: column;
    overflow: hidden;
    position: relative;
    background: #000;
    color: #000;
    font: bold 15px/16px var(--mono);
}
button,
input,
select {
    font: inherit;
    color: inherit;
    margin: 0;
    padding: 0;
    border-radius: 0;
}
svg {
    display: block;
}
.defs {
    position: absolute;
    width: 0;
    height: 0;
}
.t1,
.t2,
.t3 {
    fill: none;
    stroke: #000;
    stroke-width: 1;
}
.t2 {
    stroke-width: 2;
}
.t3 {
    stroke-width: 3;
}
.app-icon {
    width: 16px;
    height: 16px;
    flex: none;
}

/* main title bar */
.titlebar {
    height: 30px;
    flex: none;
    display: flex;
    align-items: center;
    position: relative;
    border-top: 1px solid #0b1020;
    border-bottom: 1px solid #dfe9f5;
    background: linear-gradient(to bottom, rgba(255, 255, 255, 0) 50%, rgba(190, 210, 240, 0.5)),
        linear-gradient(to right, #c0d2ea 0, #9ab6de 380px, #2b5ca4 430px, #3f6db2 520px, #2c62aa 700px, #5c85c4 850px, #6a8fca 1080px, #2f5fa6 1200px, #2f61a9 1400px, #3c70ba 1700px, #9db4dc 1920px);
}
.titlebar .app-icon {
    margin-left: -8px;
}
.titlebar h1 {
    margin: 0 0 0 5px;
    font: 13px/20px var(--ui);
}
/* blurred text seen through the glass */
.ghost {
    position: absolute;
    left: 42%;
    top: 7px;
    width: 320px;
    height: 11px;
    filter: blur(4px);
    background: linear-gradient(to right, #4b6a98 8%, #26406c 12% 28%, #4b6a98 30% 48%, transparent 49% 51%, #26406c 53% 64%, transparent 69% 72%, #3b5888 74%);
}
.popup-title .ghost {
    left: 60px;
    top: 5px;
    width: 250px;
    height: 8px;
    filter: blur(3px);
    opacity: 0.7;
    background: linear-gradient(to right, transparent 28%, #6a9aaa 30% 44%, transparent 46% 49%, #1f4450 51% 61%, transparent 63% 69%, #1f4450 71% 80%, transparent 82% 88%, #3b6a78 90%);
}
.win-buttons {
    margin-left: auto;
    margin-right: 7px;
    align-self: flex-start;
    display: flex;
    height: 19px;
    border: 1px solid #dde6f4;
    border-top: 0;
    border-radius: 0 0 5px 5px;
    overflow: hidden;
}
.win-buttons button {
    width: 27px;
    border: 0;
    border-right: 1px solid #4d5d80;
    display: grid;
    place-items: center;
    background: linear-gradient(#c3cde4 50%, #8291b8 50%, #a9bbdd);
}
.win-buttons svg {
    width: 16px;
    height: 12px;
}
.win-buttons .win-close {
    width: 47px;
    border: 0;
    background: linear-gradient(#dc9a90 48%, #b5362a 50%, #cd5b4a);
}

/* window frame */
.window {
    flex: 1;
    min-height: 0;
    display: flex;
    flex-direction: column;
    padding-right: 8px;
    background: linear-gradient(to right, #dbe8f6 2px, transparent 2px, transparent 6px, #c9d9ef 6px) right / 8px no-repeat,
        linear-gradient(#b5c8e2 250px, #4d6fa8 260px, #5a7cb4);
}
.top {
    display: flex;
    height: 56px;
    flex: none;
    background: var(--aqua-dark);
}
.menubar {
    flex: 1;
    min-width: 0;
    display: flex;
    align-items: center;
    gap: 16px;
    padding: 0 0 2px 8px;
    border: solid;
    border-width: 2px 3px 2px 0;
    border-color: var(--aqua-light) var(--aqua-dark) var(--aqua-dark);
    background: var(--aqua);
    font: bold 15px/18px var(--serif);
}
.menubar a {
    color: #000;
    text-decoration: none;
}
.menubar u {
    text-underline-offset: 4px;
}
.menubar .help {
    margin-left: auto;
    margin-right: 12px;
}
.brand {
    width: 413px;
    display: flex;
    align-items: flex-start;
    border: 2px solid var(--aqua-light);
    border-top-color: var(--aqua-dark);
    border-left-color: var(--aqua-dark);
    background: var(--aqua);
    padding: 3px 3px 0 5px;
    white-space: nowrap;
}
.logo {
    width: 162px;
    height: 40px;
    margin-top: 4px;
    font: italic bold 32px "Liberation Sans", Arial, sans-serif;
    fill: #000080;
}
.product {
    width: 136px;
    text-align: center;
    font-family: var(--serif);
}
.product strong {
    display: block;
    font-size: 24px;
    line-height: 24px;
}
.product em {
    display: block;
    font-size: 14px;
    line-height: 26px;
}
.date {
    flex: 1;
    padding-top: 1px;
    text-align: center;
    font-style: italic;
    line-height: 15px;
}

/* three columns */
main {
    flex: 1;
    min-height: 0;
    display: flex;
}
.canvas {
    flex: 1;
    min-width: 0;
    background: #000;
}
.board {
    width: 100%;
    height: 100%;
}
.board polyline,
.board path:not([fill]) {
    fill: none;
}
.vias {
    stroke: #dc46dc;
    stroke-width: 6px;
    stroke-dasharray: 6 6;
}
.wall {
    stroke: #e030e0;
    stroke-width: 6px;
    stroke-dasharray: 14 5;
}
.chip {
    stroke: #ff2cff;
    stroke-width: 11px;
    stroke-dasharray: 5 2;
}
.holes {
    stroke: #52b4e0;
    stroke-width: 6px;
    stroke-dasharray: 7 15;
}
.edge {
    stroke: #62b8e4;
    stroke-width: 7px;
    stroke-dasharray: 7 5;
}
.edge-last {
    stroke: #44a0e0;
    stroke-width: 6px;
    stroke-dasharray: 6 41;
}
.rail {
    stroke: #3f9c58;
    stroke-width: 4px;
}
.zoom-lines {
    fill: none;
    stroke: #fff;
    stroke-width: 1px;
}

/* layer list */
.layers-panel {
    width: 147px;
    flex: none;
    display: flex;
    flex-direction: column;
    overflow: hidden;
    background: var(--teal);
    border-right: 2px solid var(--teal-light);
    white-space: nowrap;
}
.job {
    margin: 2px 1px 0 0;
    border: 1px solid #000;
    border-left: 0;
    background: var(--aqua);
}
.job div {
    height: 19px;
    line-height: 19px;
    border: 1px solid var(--teal);
    border-left: 0;
}
.job div + div {
    border-top: 1px solid #000;
}
.matrix {
    margin: 2px 1px 0 0;
    border: 1px solid #000;
    border-left: 0;
    padding: 2px 2px 2px 0;
}
.matrix .bevel {
    width: 100%;
    height: 22px;
    border-left: 0;
    text-align: left;
    padding-left: 2px;
}
.bevel {
    border: 2px solid;
    border-color: var(--aqua-light) var(--aqua-dark) var(--aqua-dark) var(--aqua-light);
    background: var(--aqua);
    white-space: nowrap;
}
.layers {
    width: 120px;
    margin-top: 1px;
    padding: 3px 0 8px;
    border-top: 3px solid var(--teal-dark);
    border-right: 2px solid var(--teal-light);
    border-bottom: 2px solid var(--teal-light);
    display: flex;
    flex-direction: column;
    gap: 3px;
    box-shadow: inset -1px -1px #000;
    font-size: 12px;
    line-height: 14px;
}
.group {
    width: 116px;
    display: flex;
    flex-direction: column;
    gap: 2px;
    padding: 2px 2px 2px 1px;
    background: #000;
}
.group label {
    display: flex;
    gap: 2px;
    height: 14px;
}
.group input {
    appearance: none;
    width: 14px;
    height: 14px;
    background: linear-gradient(#fff, #fff) center / 6px 6px no-repeat,
        linear-gradient(#000, #000) center / 10px 10px no-repeat, #fff;
}
.group input:checked {
    background: linear-gradient(#fff, #fff) center / 6px 6px no-repeat,
        linear-gradient(#000, #000) center / 10px 10px no-repeat, #0000b0;
}
.group i {
    width: 14px;
}
.group span {
    flex: 1;
    min-width: 0;
    overflow: hidden;
    padding-left: 1px;
    background: var(--aqua);
}
.group .white { background: #fff; }
.group .green { background: #00a57c; }
.group .orange { background: var(--orange); }
.group .slate { background: #9ab4bf; }
.group .silver { background: #d9d9dc; }
.group .blue { background: #0018ff; }
.group .red { background: #f00; }
.group .work { background: #449400; }
.group .mark {
    display: flex;
    justify-content: space-between;
    align-items: center;
    padding-right: 1px;
}
.mark svg {
    width: 6px;
    height: 6px;
}
.selected {
    margin: auto 1px 2px 0;
    height: 21px;
    border: 1px solid #000;
    border-left: 0;
    background: var(--orange);
    box-shadow: 0 -2px var(--teal), 0 -4px var(--teal-light);
    font-size: 12px;
    line-height: 19px;
}

/* tool buttons */
.tools {
    width: 164px;
    flex: none;
    display: flex;
    flex-direction: column;
    border-left: 2px solid var(--teal-dark);
    background: #000;
}
.toolset {
    display: grid;
    grid-template-columns: repeat(4, 38px);
    gap: 2px;
    padding: 2px 0 2px 1px;
    border-right: 2px solid var(--teal-light);
}
.aqua {
    border-top: 1px solid var(--teal-dark);
    border-bottom: 2px solid var(--teal-light);
}
.gray {
    border-top: 1px solid #777;
    border-bottom: 3px solid #666;
    border-right-color: #777;
    padding-top: 1px;
}
.toolset button,
.view-tools button {
    width: 38px;
    height: 38px;
    padding: 1px;
    border: 3px solid;
    border-color: var(--aqua-light) var(--aqua-dark) var(--aqua-dark) var(--aqua-light);
    background: var(--aqua);
}
.toolset svg,
.view-tools svg,
.snap svg {
    width: 100%;
    height: 100%;
    border: 1px solid #000;
}
.toolset .stop {
    border-color: #b02020;
}
.gray button {
    border-color: #eee #8c8c8c #8c8c8c #eee;
    background: #d0d0d0;
}
.gray .plain {
    background: #fff;
    border-color: #fff #aaa #aaa #fff;
}
.gray .dark svg {
    background: #000;
}
.gray .amber {
    background: var(--orange);
    border-color: #ffe3a6 #9c7a30 #9c7a30 #ffe3a6;
}
.overview {
    flex: 1;
    min-height: 0;
    display: flex;
    align-items: center;
    border: 2px solid var(--teal-light);
    border-left: 0;
    border-top-color: var(--teal-dark);
}
.overview svg {
    width: 100%;
}
.coords {
    height: 47px;
    padding: 9px 3px 0;
    background: var(--teal);
    border: solid;
    border-width: 2px 2px 2px 0;
    border-color: var(--teal-dark) var(--teal-light) #000 var(--teal-dark);
    line-height: 15px;
    white-space: nowrap;
}

/* status line */
.status {
    height: 33px;
    flex: none;
    display: flex;
    align-items: stretch;
    gap: 1px;
    background: #000;
    border-top: 1px solid #000;
    font-size: 12px;
}
.snap {
    width: 30px;
    padding: 1px;
    border: 3px solid #d6d6ac;
    border-top-color: #fff;
    border-left-color: #fff;
    background: var(--cream);
}
.snap:first-child {
    width: 25px;
    border-left: 0;
    padding-left: 0;
}
.snap.on {
    outline: 2px solid var(--teal);
    outline-offset: -2px;
    border-color: #fff #8f8f70 #8f8f70 #fff;
    padding: 2px;
}
.snap svg {
    height: 22px;
}
.status label {
    width: 47px;
    padding-left: 3px;
    line-height: 32px;
    background: var(--cream);
}
.xy-box {
    width: 172px;
    padding: 3px 2px;
    background: var(--cream);
}
.xy-box .field {
    width: 100%;
    height: 100%;
    background-color: var(--cream);
    border-color: #94947a #dcdcb4 #dcdcb4 #94947a;
}
.status p {
    flex: 1;
    margin: 0;
    padding-left: 3px;
    line-height: 32px;
    background: var(--cream);
}
.units {
    width: 80px;
    margin-left: 1px;
    padding: 2px 4px 2px 6px;
    background: var(--teal);
    font-size: 15px;
}
.units select {
    width: 100%;
    height: 100%;
    padding-left: 5px;
    background-color: var(--teal);
    border-color: var(--teal-light) var(--teal-dark) var(--teal-dark) var(--teal-light);
}
.strip {
    height: 24px;
    flex: none;
    border-top: 2px solid #6a8585;
    border-right: 3px solid #6a9a9a;
    background: #b3fffd;
    box-shadow: inset 0 1px #000, inset 0 4px #dafffe;
}

/* motif option menus and fields */
select {
    appearance: none;
    border: 2px solid;
    border-color: var(--aqua-light) var(--aqua-dark) var(--aqua-dark) var(--aqua-light);
    background-color: var(--aqua);
    background-image: linear-gradient(var(--aqua), var(--aqua)),
        linear-gradient(var(--aqua-light), var(--aqua-light)),
        linear-gradient(var(--aqua-dark), var(--aqua-dark));
    background-position: right 7px center, right 7px top calc(50% - 1px), right 5px center;
    background-size: 8px 2px, 10px 5px, 12px 7px;
    background-repeat: no-repeat;
}
.field {
    min-width: 0;
    border: 2px solid;
    border-color: var(--aqua-dark) var(--aqua-light) var(--aqua-light) var(--aqua-dark);
    background: var(--aqua);
    padding: 0 5px 4px 7px;
    outline: none;
}
.cursor {
    background-image: repeating-linear-gradient(#000 0 1px, transparent 1px 2px);
    background-size: 1px 15px;
    background-position: 6px 2px;
    background-repeat: no-repeat;
}

/* popups */
.popup {
    position: absolute;
    border: 1px solid #a9adb0;
    border-radius: 7px 7px 4px 4px;
    padding: 0 6px 4px;
}
.popup-title {
    display: flex;
    align-items: center;
    height: 28px;
    padding-bottom: 2px;
    position: relative;
}
.popup-title h2 {
    margin: 0 0 0 5px;
    position: relative;
    font: 12px/18px var(--ui);
    text-shadow: 0 0 6px rgba(255, 255, 255, 0.8);
}
.popup-close {
    position: absolute;
    right: 0;
    top: -1px;
    width: 47px;
    height: 20px;
    border: 1px solid #8a9298;
    border-top: 0;
    border-radius: 0 0 4px 4px;
    background: rgba(255, 255, 255, 0.08);
    color: #fff;
    font: bold 16px/16px var(--ui);
    text-shadow: 0 0 2px #000, 0 0 1px #000;
}
.selection {
    left: 151px;
    top: 48px;
    width: 365px;
    background: linear-gradient(#c4e2ec, #84cfe2 38px, #85898c 39px, #34373a 86px, #08090a 88px);
}
.selection .popup-body {
    border: 2px solid var(--teal-dark);
    background: var(--teal);
}
.row {
    display: flex;
    height: 33px;
    border: 1px solid #000;
    border-width: 0 1px 1px 0;
    background: var(--aqua);
}
.split {
    height: 34px;
}
.cell {
    display: flex;
    align-items: center;
    white-space: pre;
    padding-top: 1px;
}
.split .cell:first-child {
    width: 169px;
    border-right: 2px solid #000;
}
.cell label {
    width: 61px;
}
.pads label {
    width: 87px;
    padding-left: 9px;
}
.cell select {
    height: 28px;
}
.sel-filter {
    width: 104px;
    padding-left: 12px;
}
.sel-shape {
    width: 87px;
    padding-left: 4px;
}
.sel-touch {
    width: 150px;
    padding-left: 35px;
}
.pair {
    height: 30px;
    background: var(--teal);
}
.pair .bevel {
    width: 171px;
    margin: 3px 2px 2px;
    text-align: left;
    padding-left: 2px;
}
.pair .field {
    flex: 1;
    outline: 2px solid var(--aqua);
    margin: 3px 2px 2px 4px;
    box-shadow: -4px 0 #000;
}
.features {
    display: flex;
    height: 47px;
    gap: 1px;
    border-bottom: 1px solid #000;
    background: linear-gradient(to right, #000 326px, transparent 326px);
    padding: 1px 0 0 1px;
}
.features button {
    width: 45px;
    padding: 4px;
    border: 3px solid;
    border-color: var(--aqua-dark) var(--aqua-light) var(--aqua-light) var(--aqua-dark);
    outline: 1px solid var(--aqua);
    outline-offset: -1px;
    background: var(--aqua);
    display: grid;
    place-items: center;
}
.features svg {
    width: 28px;
    height: 28px;
    background: #000;
}
.features .cream {
    background: var(--cream);
    border-color: #cfcfa2 #8f8f6c #8f8f6c #cfcfa2;
    outline-color: var(--cream);
}
.features button:not(.cream) + .cream {
    margin-left: 2px;
}
.features .minus svg {
    background: var(--cream);
    border: 1px solid #000;
}
.actions {
    display: flex;
    gap: 20px;
    height: 41px;
    margin-top: 2px;
    padding: 5px 0 0 49px;
    border-top: 1px solid var(--teal-dark);
    box-shadow: 0 -2px var(--teal-light);
}
.ring {
    display: flex;
    height: 29px;
    padding: 2px;
    border: 1px solid #000;
}
.ring:first-child {
    margin-right: 9px;
}
.ring .bevel {
    width: 71px;
}
.ring .ok {
    width: 62px;
}

.popview {
    left: 1199px;
    top: 384px;
    width: 537px;
    background: radial-gradient(ellipse 60px 14px at 62px 13px, rgba(200, 200, 200, 0.65), transparent),
        linear-gradient(to right, rgba(90, 90, 90, 0.6), rgba(0, 0, 0, 0) 55%, rgba(80, 80, 80, 0.5) 75%, rgba(60, 60, 60, 0.5)) 0 0 / 100% 108px no-repeat, #060606;
}
.popview .popup-title h2 {
    text-shadow: 0 0 5px #bbb, 0 0 8px #aaa;
}
.popview .popup-body {
    border: 1px solid #555;
    outline: 1px solid #888;
}
.view {
    display: flex;
    height: 301px;
    background: #000;
}
.magnified {
    flex: 1;
    min-width: 0;
    height: 301px;
    border: 3px solid;
    border-color: var(--teal-dark) var(--teal-light) var(--teal-light) var(--teal-dark);
}
.view-tools {
    width: 35px;
    margin-left: 1px;
    display: flex;
    flex-direction: column;
    gap: 2px;
    padding-top: 1px;
    background: linear-gradient(#000 246px, var(--teal) 246px);
}
.view-tools button {
    width: 33px;
    height: 33px;
    padding: 2px;
    outline: 1px solid var(--teal);
    outline-offset: -1px;
}
.view-close {
    border: 1px solid var(--teal);
    border-top: 2px solid #000;
}
.view-close .bevel {
    display: block;
    width: 100%;
    height: 26px;
}

/* taskbar */
.taskbar {
    height: 40px;
    flex: none;
    display: flex;
    align-items: stretch;
    gap: 4px;
    padding-left: 10px;
    border-top: 1px solid #6d84ac;
    background: linear-gradient(rgba(190, 210, 240, 0.7), rgba(120, 150, 200, 0.2) 12px, rgba(0, 0, 0, 0.25) 14px, rgba(0, 0, 0, 0.1)),
        linear-gradient(to right, #1a3a68, #23508c 45%, #123463 75%, #0c2448);
}
.start {
    width: 36px;
    height: 36px;
    margin: 1px 10px 0 0;
    padding: 5px;
    border: 1px solid #9cc6e8;
    border-radius: 50%;
    background: radial-gradient(circle at 50% 90%, #4fb8ee, #1c5b9c 60%, #5b8dbb);
}
.task {
    width: 58px;
    border: 1px solid #a9b6cc;
    border-radius: 3px;
    display: grid;
    place-items: center;
    background: linear-gradient(165deg, rgba(255, 255, 255, 0.5), rgba(255, 255, 255, 0.15) 48%, rgba(0, 0, 0, 0.1) 50%, rgba(255, 255, 255, 0.15));
}
.task svg {
    width: 32px;
    height: 30px;
}
.stack {
    width: 50px;
    margin-right: 8px;
    box-shadow: 3px 0 #30496f, 4px 0 #9aa8c0, 6px 0 #30496f, 7px 0 #8292ae;
}
.active {
    background: linear-gradient(165deg, #d5dbe6, #8b96aa 50%, #c3cad6);
}
.tray {
    margin: 0 4px 0 auto;
    display: flex;
    align-items: center;
    gap: 6px;
}
.tray svg {
    width: 16px;
    height: 16px;
}
.tray .flag {
    margin-left: 4px;
}
.clock {
    width: 70px;
    padding-top: 2px;
    text-align: center;
    color: #fff;
    font: 13px/18px var(--ui);
}
.desktop {
    width: 14px;
    border: 1px solid #6e85a8;
    background: rgba(255, 255, 255, 0.12);
}
```
